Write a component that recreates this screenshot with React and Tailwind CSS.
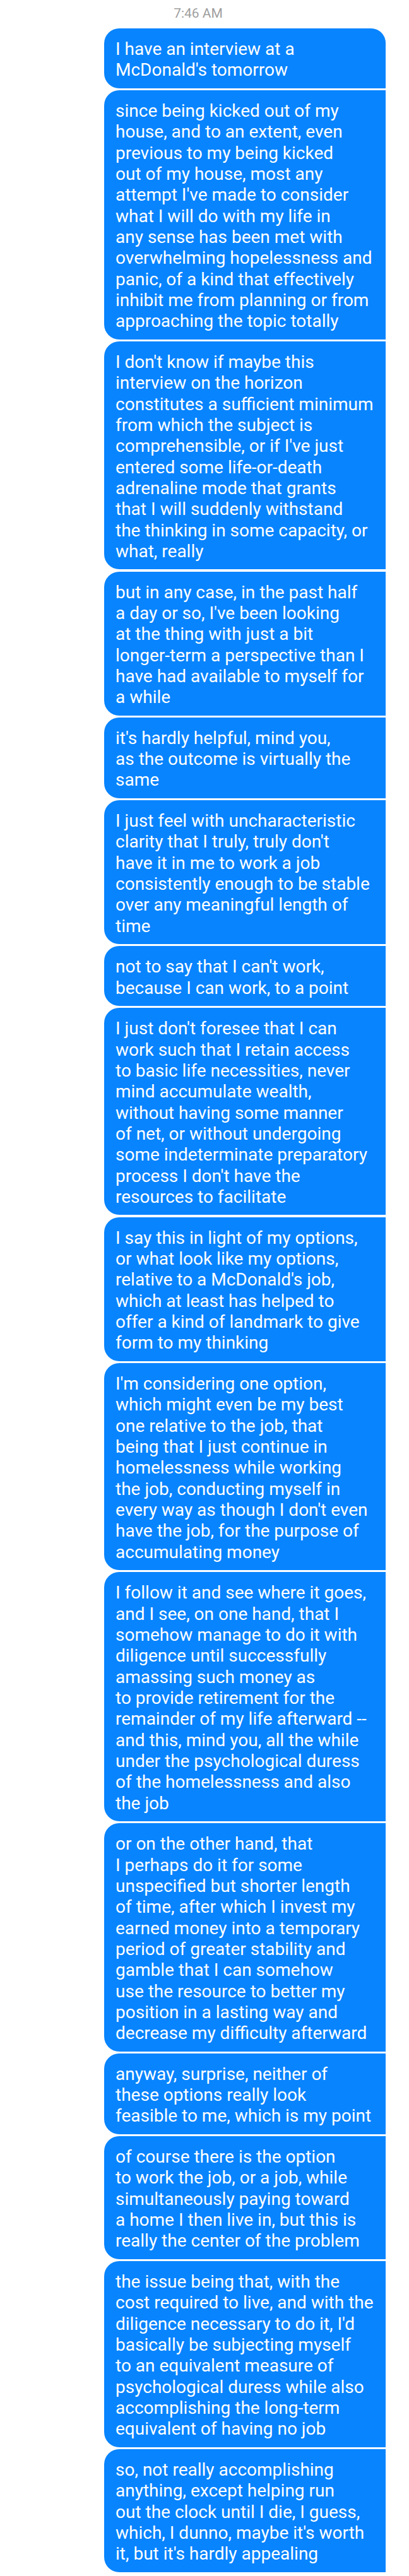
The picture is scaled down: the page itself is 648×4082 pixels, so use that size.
import React from "react";

const messages = [
  ["I have an interview at a", "McDonald's tomorrow"],
  [
    "since being kicked out of my",
    "house, and to an extent, even",
    "previous to my being kicked",
    "out of my house, most any",
    "attempt I've made to consider",
    "what I will do with my life in",
    "any sense has been met with",
    "overwhelming hopelessness and",
    "panic, of a kind that effectively",
    "inhibit me from planning or from",
    "approaching the topic totally",
  ],
  [
    "I don't know if maybe this",
    "interview on the horizon",
    "constitutes a sufficient minimum",
    "from which the subject is",
    "comprehensible, or if I've just",
    "entered some life-or-death",
    "adrenaline mode that grants",
    "that I will suddenly withstand",
    "the thinking in some capacity, or",
    "what, really",
  ],
  [
    "but in any case, in the past half",
    "a day or so, I've been looking",
    "at the thing with just a bit",
    "longer-term a perspective than I",
    "have had available to myself for",
    "a while",
  ],
  ["it's hardly helpful, mind you,", "as the outcome is virtually the", "same"],
  [
    "I just feel with uncharacteristic",
    "clarity that I truly, truly don't",
    "have it in me to work a job",
    "consistently enough to be stable",
    "over any meaningful length of",
    "time",
  ],
  ["not to say that I can't work,", "because I can work, to a point"],
  [
    "I just don't foresee that I can",
    "work such that I retain access",
    "to basic life necessities, never",
    "mind accumulate wealth,",
    "without having some manner",
    "of net, or without undergoing",
    "some indeterminate preparatory",
    "process I don't have the",
    "resources to facilitate",
  ],
  [
    "I say this in light of my options,",
    "or what look like my options,",
    "relative to a McDonald's job,",
    "which at least has helped to",
    "offer a kind of landmark to give",
    "form to my thinking",
  ],
  [
    "I'm considering one option,",
    "which might even be my best",
    "one relative to the job, that",
    "being that I just continue in",
    "homelessness while working",
    "the job, conducting myself in",
    "every way as though I don't even",
    "have the job, for the purpose of",
    "accumulating money",
  ],
  [
    "I follow it and see where it goes,",
    "and I see, on one hand, that I",
    "somehow manage to do it with",
    "diligence until successfully",
    "amassing such money as",
    "to provide retirement for the",
    "remainder of my life afterward --",
    "and this, mind you, all the while",
    "under the psychological duress",
    "of the homelessness and also",
    "the job",
  ],
  [
    "or on the other hand, that",
    "I perhaps do it for some",
    "unspecified but shorter length",
    "of time, after which I invest my",
    "earned money into a temporary",
    "period of greater stability and",
    "gamble that I can somehow",
    "use the resource to better my",
    "position in a lasting way and",
    "decrease my difficulty afterward",
  ],
  [
    "anyway, surprise, neither of",
    "these options really look",
    "feasible to me, which is my point",
  ],
  [
    "of course there is the option",
    "to work the job, or a job, while",
    "simultaneously paying toward",
    "a home I then live in, but this is",
    "really the center of the problem",
  ],
  [
    "the issue being that, with the",
    "cost required to live, and with the",
    "diligence necessary to do it, I'd",
    "basically be subjecting myself",
    "to an equivalent measure of",
    "psychological duress while also",
    "accomplishing the long-term",
    "equivalent of having no job",
  ],
  [
    "so, not really accomplishing",
    "anything, except helping run",
    "out the clock until I die, I guess,",
    "which, I dunno, maybe it's worth",
    "it, but it's hardly appealing",
  ],
];

const Bubble = ({ lines, first }) => (
  <div
    className={
      "w-[446px] bg-[#0884ff] text-white pl-[18.5px] pr-3 pt-4 pb-3 rounded-l-[24px] mb-[3.33px] " +
      (first ? "rounded-tr-[23px]" : "")
    }
  >
    {lines.map((line, i) => (
      <div key={i} className="whitespace-nowrap text-[28px] leading-[33.33px]">
        {line}
      </div>
    ))}
  </div>
);

export default function App() {
  return (
    <div className="w-[648px] min-h-[4082px] bg-white font-['Roboto',sans-serif]">
      <div className="pt-[9px] pb-[12px] pr-[20px] text-center text-[21px] leading-[24px] text-[#9e9e9e]">
        7:46 AM
      </div>
      <div className="ml-[164.5px] flex flex-col">
        {messages.map((lines, i) => (
          <Bubble key={i} lines={lines} first={i === 0} />
        ))}
      </div>
    </div>
  );
}
